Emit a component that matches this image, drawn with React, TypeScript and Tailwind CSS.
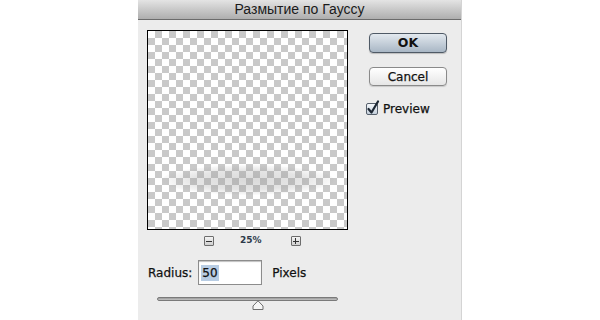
export default function App() {
  return (
    <div className="h-[320px] w-[600px] overflow-hidden bg-white font-['DejaVu_Sans',sans-serif]">
      <div className="ml-[138px] flex h-[320px] w-[324px] flex-col bg-[#ececec] border-r border-[#d4d4d4]">
        <div className="flex h-[20px] items-center justify-center border-b border-[#6b6b6b] bg-gradient-to-b from-[#e4e4e4] to-[#aeaeae] font-['Liberation_Sans',sans-serif] text-[14px] text-[#1a1a1a]">
          Размытие по Гауссу
        </div>
        <div className="flex">
          <div className="flex flex-col pl-[9px] pt-[10px]">
            <div className="relative h-[200px] w-[201px] border border-black bg-white bg-[image:conic-gradient(#c9c9c9_25%,#fff_0_50%,#c9c9c9_0_75%,#fff_0)] bg-[length:14px_14px]">
              <div className="absolute left-[14px] top-[134px] h-[30px] w-[172px] rounded-[50%] bg-[radial-gradient(ellipse_at_center,rgba(150,150,150,0.35)_0%,rgba(150,150,150,0.25)_45%,rgba(150,150,150,0)_75%)]" />
            </div>
            <div className="mt-[5px] flex h-[12px] items-center">
              <div className="ml-[57px] flex h-[10px] w-[10px] items-center justify-center rounded-[1px] border border-[#6d6d6d] bg-gradient-to-b from-[#f4f4f4] to-[#cfcfcf]">
                <div className="h-[1px] w-[6px] bg-[#333]" />
              </div>
              <div className="ml-[26px] text-[9px] font-bold text-[#2c3a4a]">25%</div>
              <div className="ml-[29px] relative flex h-[10px] w-[10px] items-center justify-center rounded-[1px] border border-[#6d6d6d] bg-gradient-to-b from-[#f4f4f4] to-[#cfcfcf]">
                <div className="h-[1px] w-[6px] bg-[#333]" />
                <div className="absolute h-[6px] w-[1px] bg-[#333]" />
              </div>
            </div>
            <div className="mt-[13px] flex items-center text-[12px] text-[#111] [-webkit-text-stroke:0.25px_#111]">
              <span className="ml-[1px]">Radius:</span>
              <div className="ml-[6px] flex h-[25px] w-[64px] items-center border border-[#8c8c8c] bg-white pl-[2px] shadow-[inset_0_1px_1px_rgba(0,0,0,0.25)]">
                <span className="bg-[#b8cde4] px-[1px] leading-[16px]">50</span>
              </div>
              <span className="ml-[10px]">Pixels</span>
            </div>
            <div className="relative ml-[10px] mt-[12px] h-[4px] w-[181px] rounded-full border border-[#7a7a7a] bg-gradient-to-b from-[#9a9a9a] to-[#c4c4c4]">
              <svg className="absolute left-[94px] top-[2px]" width="12" height="10" viewBox="0 0 12 10">
                <path d="M1 9.5 L1 6 L6 0.8 L11 6 L11 9.5 Z" fill="#f6f6f6" stroke="#6e6e6e" strokeWidth="1" />
              </svg>
            </div>
          </div>
          <div className="ml-[21px] flex flex-col pt-[13px] text-[12px] text-[#111] [-webkit-text-stroke:0.25px_#111]">
            <button className="flex h-[20px] w-[78px] items-center justify-center rounded-[4px] border border-[#4f5a66] bg-gradient-to-b from-[#e3e9ef] to-[#a9b7c5] font-bold text-[12.5px] [-webkit-text-stroke:0] shadow-[0_1px_1px_rgba(0,0,0,0.2)]">
              OK
            </button>
            <button className="mt-[14px] flex h-[19px] w-[78px] items-center justify-center rounded-[4px] border border-[#8a8a8a] bg-gradient-to-b from-[#ffffff] to-[#e6e6e6] shadow-[0_1px_1px_rgba(0,0,0,0.15)]">
              Cancel
            </button>
            <div className="-ml-[3px] mt-[14px] flex items-center">
              <div className="relative h-[12px] w-[12px] rounded-[2px] border border-[#56606c] bg-gradient-to-b from-[#f4f7fa] to-[#c5d0dc]">
                <svg className="absolute -left-[1px] -top-[4px]" width="14" height="16" viewBox="0 0 14 16">
                  <path d="M2.5 9 L5.5 12.5 L12 1.5" fill="none" stroke="#1d2733" strokeWidth="2.2" strokeLinecap="round" strokeLinejoin="round" />
                </svg>
              </div>
              <span className="ml-[5px]">Preview</span>
            </div>
          </div>
        </div>
      </div>
    </div>
  );
}
